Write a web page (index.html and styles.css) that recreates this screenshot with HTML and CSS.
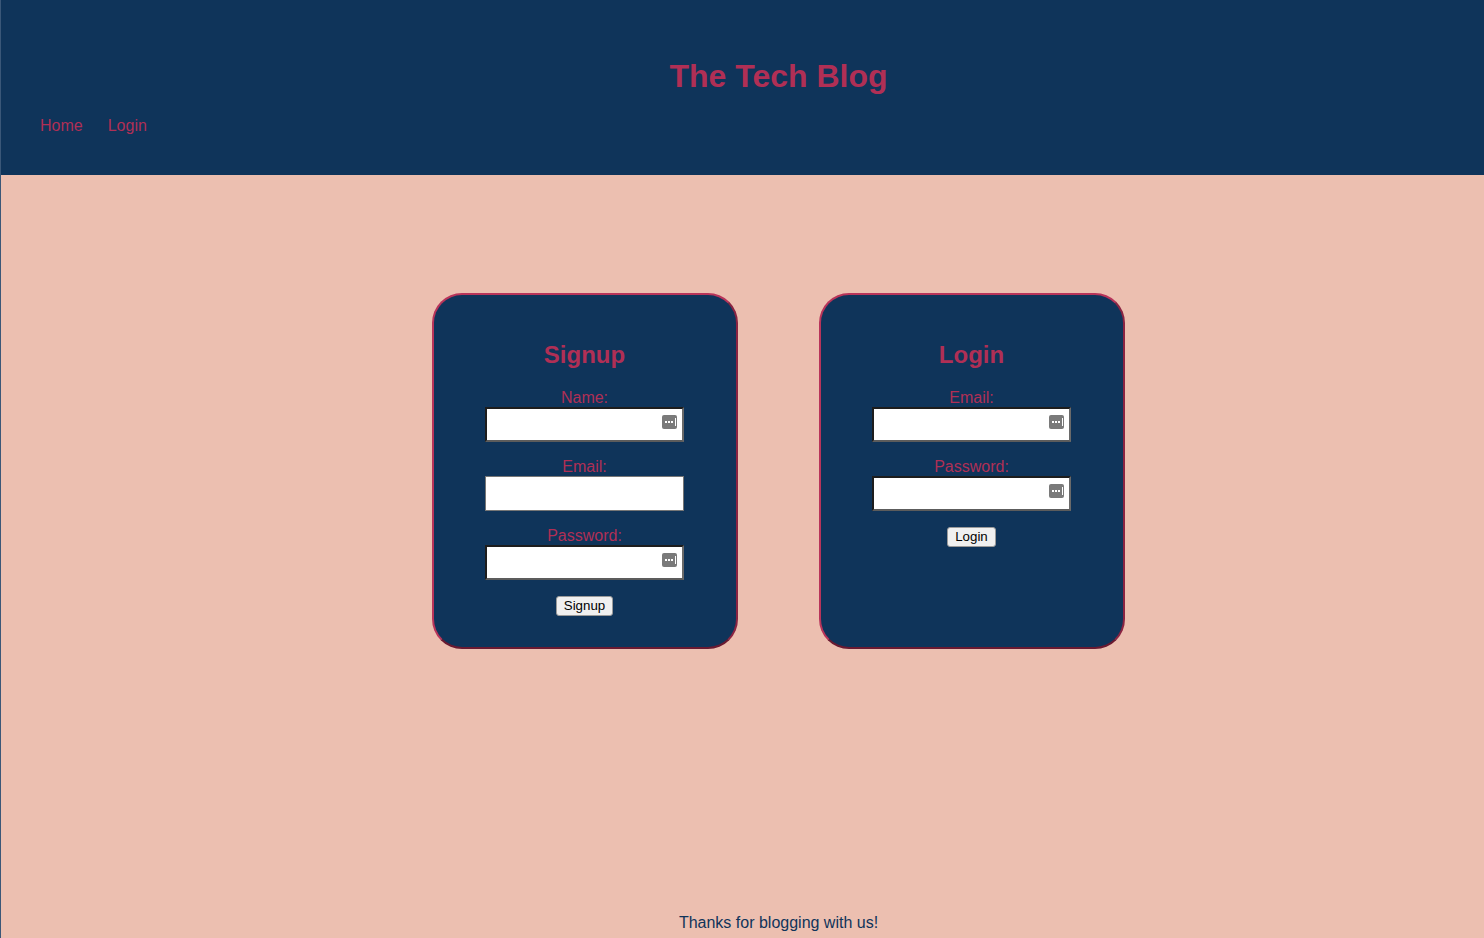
FILE: index.html
```html
<!DOCTYPE html>
<html lang="en">
<head>
<meta charset="utf-8">
<title>The Tech Blog</title>
<link rel="stylesheet" href="styles.css">
</head>
<body>
<header class="site-header">
  <h1 class="site-title">The Tech Blog</h1>
  <nav class="nav">
    <a class="nav-link" href="#">Home</a>
    <a class="nav-link" href="#">Login</a>
  </nav>
</header>
<main class="main">
  <div class="cards">
    <form class="card">
      <h2 class="card-title">Signup</h2>
      <label class="field-label" for="name">Name:</label>
      <span class="field">
        <input class="input input-key" id="name" type="text">
        <span class="key-icon"><i></i><i></i><i></i><b></b></span>
      </span>
      <label class="field-label" for="email">Email:</label>
      <span class="field">
        <input class="input input-plain" id="email" type="text">
      </span>
      <label class="field-label" for="password">Password:</label>
      <span class="field">
        <input class="input input-key" id="password" type="password">
        <span class="key-icon"><i></i><i></i><i></i><b></b></span>
      </span>
      <button class="btn" type="button">Signup</button>
    </form>
    <form class="card">
      <h2 class="card-title">Login</h2>
      <label class="field-label" for="lemail">Email:</label>
      <span class="field">
        <input class="input input-key" id="lemail" type="text">
        <span class="key-icon"><i></i><i></i><i></i><b></b></span>
      </span>
      <label class="field-label" for="lpassword">Password:</label>
      <span class="field">
        <input class="input input-key" id="lpassword" type="password">
        <span class="key-icon"><i></i><i></i><i></i><b></b></span>
      </span>
      <button class="btn" type="button">Login</button>
    </form>
  </div>
</main>
<footer class="footer">Thanks for blogging with us!</footer>
</body>
</html>
```

FILE: styles.css
```css
html, body {
  margin: 0;
  padding: 0;
}

body {
  min-height: 100vh;
  display: flex;
  flex-direction: column;
  background: #ecbfb0;
  font-family: "Liberation Sans", Arial, sans-serif;
  border-left: 1px solid #3a5778;
  box-sizing: border-box;
}

.site-header {
  background: #0f345a;
  height: 175px;
  box-sizing: border-box;
  padding-top: 58px;
}

.site-title {
  margin: 0;
  padding-left: 72px;
  text-align: center;
  font-size: 32px;
  font-weight: bold;
  color: #b02f55;
  line-height: 37px;
}

.nav {
  display: flex;
  gap: 25px;
  padding-left: 39px;
  margin-top: 22px;
}

.nav-link {
  color: #b02f55;
  text-decoration: none;
  font-size: 16px;
  line-height: 18px;
}

.main {
  flex: 1;
  padding-top: 118px;
  padding-left: 71px;
}

.cards {
  display: flex;
  justify-content: center;
  gap: 81px;
}

.card {
  width: 306px;
  height: 356px;
  box-sizing: border-box;
  background: #0f345a;
  border: 2px solid #b8345a;
  border-right-color: #8a2442;
  border-bottom-color: #6a1a31;
  border-radius: 30px;
  padding: 24px 0;
  display: flex;
  flex-direction: column;
  align-items: center;
}

.card-title {
  margin: 22px 0 20px;
  font-size: 24px;
  line-height: 28px;
  color: #b02f55;
  font-weight: bold;
}

.field-label {
  color: #b02f55;
  font-size: 16px;
  line-height: 18px;
  margin-bottom: 0;
}

.field {
  position: relative;
  display: block;
  width: 199px;
  height: 35px;
  margin-bottom: 16px;
}

.input {
  width: 199px;
  height: 35px;
  box-sizing: border-box;
  background: #fff;
  margin: 0;
  padding: 0 4px;
  font: 13px "Liberation Sans", Arial, sans-serif;
  outline: none;
}

.input-key {
  border: 2px solid #1d1d1d;
  border-right-color: #6a6a6a;
  border-bottom-color: #5c5c5c;
}

.input-plain {
  border: 1px solid #767676;
}

.key-icon {
  position: absolute;
  right: 7px;
  top: 8px;
  width: 15px;
  height: 14px;
  background: #7a7a7a;
  border-radius: 2px;
  display: flex;
  align-items: center;
  gap: 1px;
  padding-left: 3px;
  box-sizing: border-box;
}

.key-icon i {
  display: block;
  width: 2px;
  height: 2px;
  background: #fff;
}

.key-icon b {
  display: block;
  width: 1px;
  height: 8px;
  background: #fff;
  margin-left: 1px;
}

.btn {
  margin-top: 0;
  font: 13.3px "Liberation Sans", Arial, sans-serif;
  color: #000;
  background: #f0f0f0;
  border: 1px solid #9a9a9a;
  border-radius: 3px;
  padding: 1px 7px;
  height: 20px;
  line-height: 16px;
}

.footer {
  padding-left: 72px;
  text-align: center;
  color: #0f345a;
  font-size: 16px;
  line-height: 18px;
  padding-bottom: 6px;
}
```
